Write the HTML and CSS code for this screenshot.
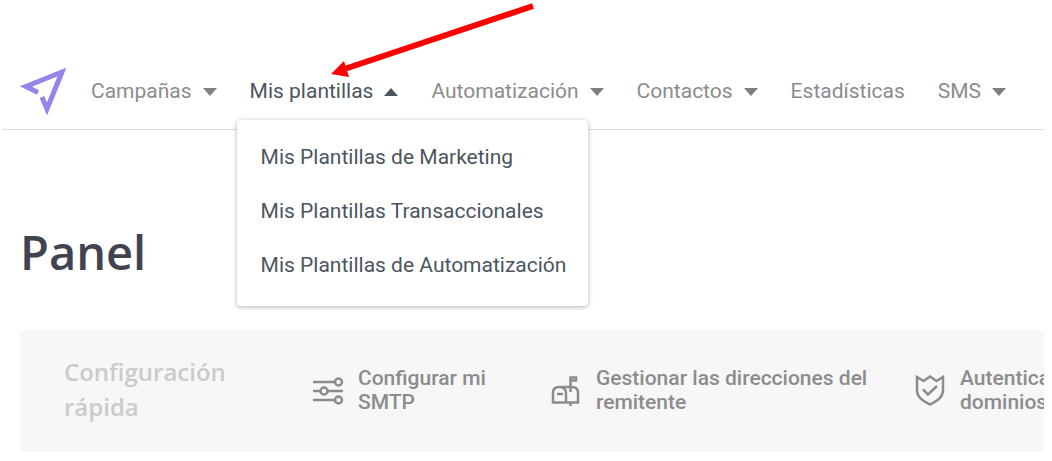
FILE: index.html
```html
<!DOCTYPE html>
<html lang="es">
<head>
    <meta charset="UTF-8">
    <meta name="viewport" content="width=device-width, initial-scale=1.0">
    <title>Panel</title>

    <link rel="stylesheet" href="styles.css">
</head>
<body>
    <header class="header">
        <a href="#" class="logo" aria-label="Inicio">
            <svg width="48" height="48" viewBox="0 0 48 48">
                <path d="M20 25.500 L8 19.500 L44 5 L29 42 L24 30" fill="none" stroke="#9683ec" stroke-width="5" stroke-miterlimit="10"/>
            </svg>
        </a>
        <nav class="nav">
            <button class="nav-item">Campañas <span class="caret"></span></button>
            <div class="nav-group">
                <button class="nav-item active" aria-expanded="true">Mis plantillas <span class="caret up"></span></button>
                <div class="dropdown">
                    <a href="#">Mis Plantillas de Marketing</a>
                    <a href="#">Mis Plantillas Transaccionales</a>
                    <a href="#">Mis Plantillas de Automatización</a>
                </div>
            </div>
            <button class="nav-item">Automatización <span class="caret"></span></button>
            <button class="nav-item">Contactos <span class="caret"></span></button>
            <a href="#" class="nav-item">Estadísticas</a>
            <button class="nav-item">SMS <span class="caret"></span></button>
        </nav>
        <svg class="pointer" width="210" height="80" viewBox="0 0 210 80">
            <path d="M205 6 L18 68.500" stroke="#fe0000" stroke-width="6"/>
            <path d="M3 74 L16 61 L21 77 Z" fill="#fe0000"/>
        </svg>
    </header>

    <main>
        <h1>Panel</h1>

        <section class="setup">
            <h2>Configuración rápida</h2>
            <a href="#" class="setup-item smtp">
                <svg width="32" height="32" viewBox="0 0 32 32" fill="none" stroke="#8c8c8c" stroke-width="2.500">
                    <path d="M1 8h22M1 17h8M15 17h16M1 26h22"/>
                    <circle cx="26.500" cy="8" r="3.500"/>
                    <circle cx="12" cy="17" r="3.500"/>
                    <circle cx="26.500" cy="26" r="3.500"/>
                </svg>
                <span>Configurar mi SMTP</span>
            </a>
            <a href="#" class="setup-item sender">
                <svg width="32" height="32" viewBox="0 0 32 32" fill="none" stroke="#8c8c8c" stroke-width="2.500">
                    <path d="M16 28.500H3V19c0-4 2-6 6-6s7 2 7 6v9.500h12V19c0-4-2-6-6-6H9M20.500 18V3.500H26v3h-5.500M20.500 28.500V32M7 20h6"/>
                </svg>
                <span>Gestionar las direcciones del remitente</span>
            </a>
            <a href="#" class="setup-item domains">
                <svg width="32" height="32" viewBox="0 0 32 32" fill="none" stroke="#8c8c8c" stroke-width="2.500">
                    <path d="M3 3l6.500 4L16 2.500 22.500 7 29 3v13c0 7-5 10.500-13 14.500C8 26.500 3 23 3 16z"/>
                    <path d="M9 15.500l5 5 9-8.500"/>
                </svg>
                <span>Autentica<br>dominios</span>
            </a>
        </section>
    </main>
</body>
</html>
```

FILE: styles.css
```css
* {
    box-sizing: border-box;
}

body {
    margin: 0 8px 0 2px;
    background: #fff;
    font-family: Roboto, sans-serif;
    font-size: 21px;
    color: #4b565e;
    overflow-x: hidden;
}

a {
    color: inherit;
    text-decoration: none;
}

.header {
    position: relative;
    display: flex;
    align-items: center;
    padding: 52px 0 0 16px;
    height: 130px;
    border-bottom: 1px solid #dcdcdc;
}

.logo {
    display: flex;
    margin-right: 25px;
}

.nav {
    display: flex;
    align-items: center;
    gap: 33px;
}

.nav-group {
    position: relative;
}

.nav-item {
    display: flex;
    align-items: center;
    gap: 11px;
    padding: 0;
    border: none;
    background: none;
    font: inherit;
    line-height: 28px;
    color: #8c8c8c;
    white-space: nowrap;
    cursor: pointer;
}

.nav-item.active {
    color: #4b565e;
}

.caret {
    margin-top: 2px;
    border: 7px solid transparent;
    border-top: 8px solid #808080;
    border-bottom: 0;
}

.caret.up {
    border-top: 0;
    border-bottom: 8px solid #4b565e;
}

/* Open menu */
.dropdown {
    position: absolute;
    top: 43px;
    left: -13px;
    z-index: 1;
    display: flex;
    flex-direction: column;
    gap: 26px;
    padding: 23px 22px 27px 24px;
    background: #fff;
    border-radius: 4px;
    box-shadow: 0 1px 5px rgba(0, 0, 0, 0.3);
    line-height: 28px;
    white-space: nowrap;
}

.pointer {
    position: absolute;
    top: 0;
    left: 326px;
    z-index: 2;
}

h1 {
    margin: 87px 0 43px 18px;
    font-family: "Open Sans", sans-serif;
    font-size: 47px;
    font-weight: 600;
    line-height: 70px;
    color: #414450;
}

.setup {
    display: flex;
    align-items: center;
    margin-left: 18px;
    padding: 24px 0 28px 44px;
    background: #f7f7f7;
    border-radius: 4px 0 0 4px;
    overflow: hidden;
}

.setup h2 {
    flex: 0 0 248px;
    margin: 0;
    padding-right: 80px;
    font-family: "Open Sans", sans-serif;
    font-size: 24px;
    font-weight: 600;
    line-height: 35px;
    color: #cbcbcb;
}

.setup-item {
    display: flex;
    flex: none;
    align-items: center;
    gap: 14px;
    padding-top: 2px;
    font-weight: 500;
    line-height: 24px;
    color: #8c8c8c;
}

.setup-item svg {
    flex: none;
}

.smtp {
    width: 238px;
    padding-right: 60px;
}

.sender {
    width: 364px;
    padding-right: 40px;
}
```
